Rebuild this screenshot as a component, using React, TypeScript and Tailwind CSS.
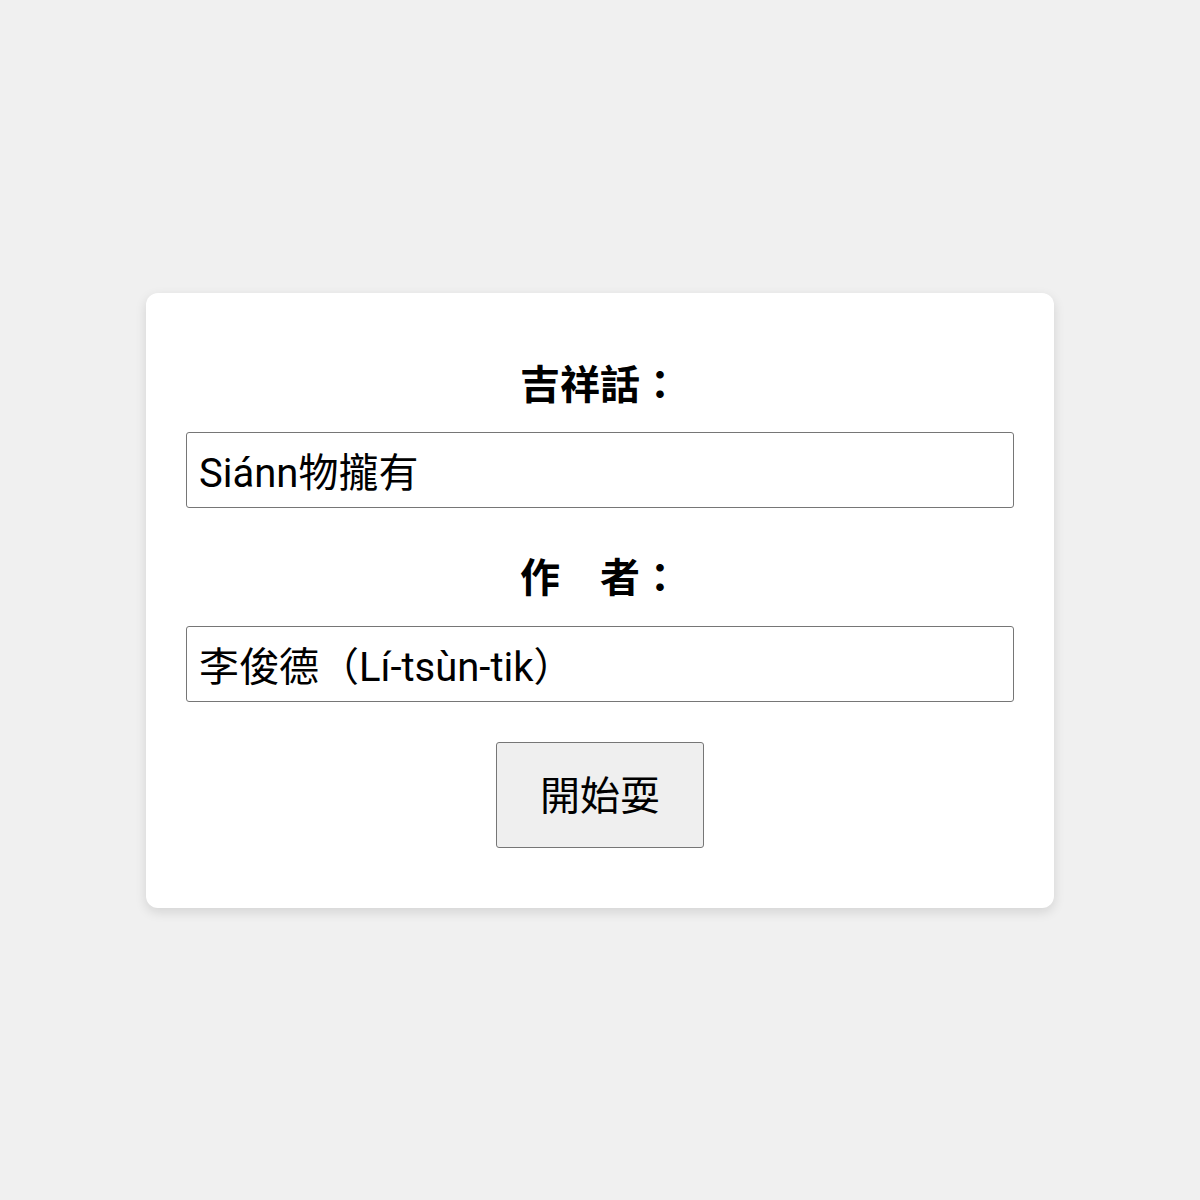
import React from 'react';

const font = "font-['Roboto','Noto_Sans_CJK_TC',sans-serif]";

const App: React.FC = () => {
  return (
    <div className={`min-h-screen w-full bg-[#f0f0f0] flex items-center justify-center ${font}`}>
      <div className="w-[908px] bg-white rounded-xl shadow-[0_4px_12px_rgba(0,0,0,0.12)] px-10 pt-[64px] pb-[60px] flex flex-col items-center text-black">
        <label className="text-[40px] leading-[58px] font-bold mb-[17px]">吉祥話：</label>
        <input
          defaultValue="Siánn物攏有"
          className="w-full h-[76px] border border-[#767676] rounded-[3px] px-3 text-[40px] text-black outline-none"
        />
        <label className="text-[40px] leading-[58px] font-bold mt-[42px] mb-[18px]">作　者：</label>
        <input
          defaultValue="李俊德（Lí-tsùn-tik）"
          className="w-full h-[76px] border border-[#767676] rounded-[3px] px-3 text-[40px] text-black outline-none"
        />
        <button className="mt-[40px] h-[106px] w-[208px] pt-[5px] bg-[#efefef] border border-[#767676] rounded-[3px] text-[40px] text-black">
          開始耍
        </button>
      </div>
    </div>
  );
};

export default App;
